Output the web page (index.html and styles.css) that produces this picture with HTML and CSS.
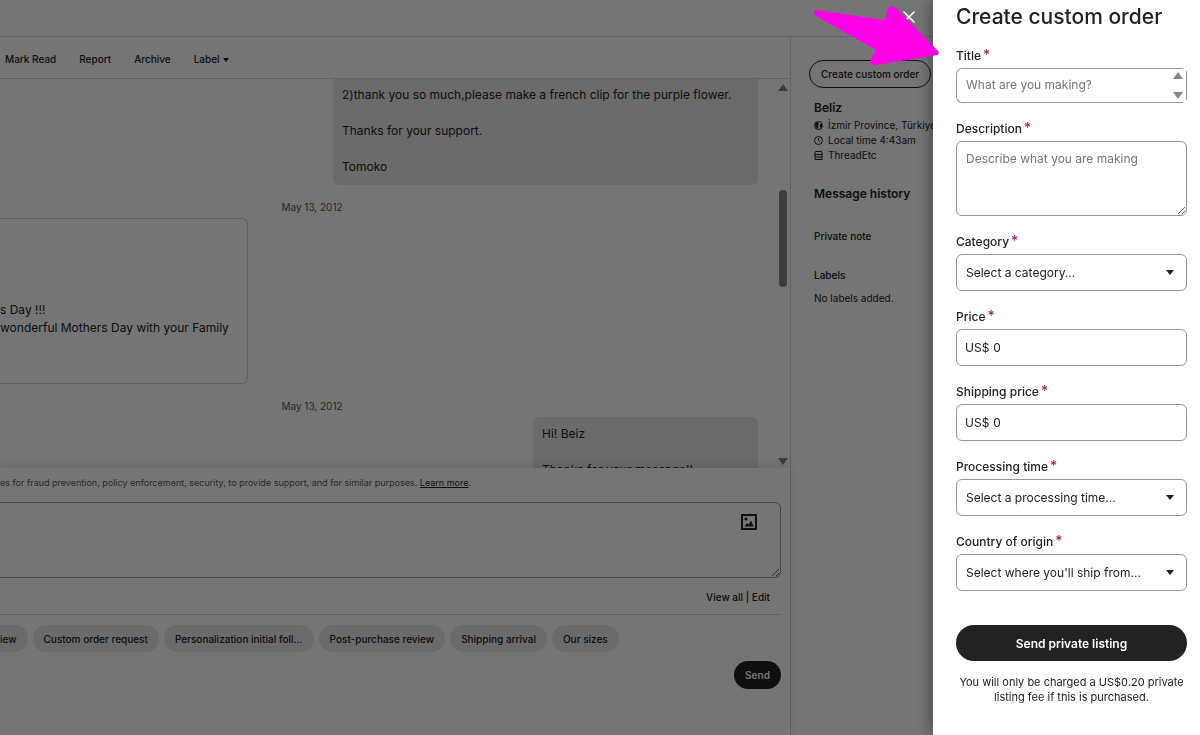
FILE: index.html
```html
<!DOCTYPE html>
<html lang="en">
<head>
  <meta charset="UTF-8" />
  <meta name="viewport" content="width=device-width, initial-scale=1.0"/>
  <title>Create custom order</title>
  <link rel="stylesheet" href="styles.css">
</head>
<body>
  <div class="app">
    <header class="topbar"></header>

    <div class="columns">
      <main class="conversation">
        <nav class="toolbar">
          <button>Mark Read</button>
          <button>Report</button>
          <button>Archive</button>
          <button>Label <span class="caret"></span></button>
        </nav>

        <div class="thread">
          <div class="messages">
            <div class="bubble sent first">2)thank you so much,please make a french clip for the purple flower.<br><br>Thanks for your support.<br><br>Tomoko</div>
            <div class="date">May 13, 2012</div>
            <div class="bubble received"><br><br><br><br>s Day !!!<br>wonderful Mothers Day with your Family<br><br><br></div>
            <div class="date">May 13, 2012</div>
            <div class="bubble sent short">Hi! Beiz<br><br>Thanks for your message!!</div>
          </div>
          <div class="scrollbar">
            <span class="arrow-up"></span>
            <span class="thumb"></span>
            <span class="arrow-down"></span>
          </div>
        </div>

        <section class="composer">
          <p class="notice">es for fraud prevention, policy enforcement, security, to provide support, and for similar purposes. <a href="#">Learn more</a>.</p>
          <div class="reply">
            <textarea aria-label="Reply"></textarea>
            <button class="attach" aria-label="Attach image">
              <svg width="16" height="16" viewBox="0 0 16 16">
                <rect x="1" y="1" width="14" height="14" fill="none" stroke="#222" stroke-width="2"/>
                <circle cx="5" cy="5" r="1.6" fill="#222"/>
                <path d="M3.5 12.5 L6 9 L7.5 10.5 L10 6.5 L12.5 12.5 Z" fill="#222"/>
              </svg>
            </button>
          </div>
          <div class="snippet-links"><a href="#">View all</a> | <a href="#">Edit</a></div>
          <div class="chips">
            <button class="cut">iew</button>
            <button>Custom order request</button>
            <button>Personalization initial foll...</button>
            <button>Post-purchase review</button>
            <button>Shipping arrival</button>
            <button>Our sizes</button>
          </div>
          <div class="send-row"><button class="send">Send</button></div>
        </section>
      </main>

      <aside class="buyer">
        <button class="create">Create custom order</button>
        <h2>Beliz</h2>
        <ul>
          <li>
            <svg width="9" height="9" viewBox="0 0 9 9"><circle cx="4.5" cy="4.5" r="4" fill="none" stroke="#222"/><path d="M1 2 L4 1 L5 3 L3.5 4.5 L4.5 6 L3.5 8 L2 6 L1 4 Z M6 3 L8 3 L8 6 L6.5 7 L5.5 5 Z" fill="#222"/></svg>
            İzmir Province, Türkiye
          </li>
          <li>
            <svg width="9" height="9" viewBox="0 0 9 9"><circle cx="4.5" cy="4.5" r="4" fill="none" stroke="#222"/><path d="M4.5 2 V4.5 L6 6" fill="none" stroke="#222"/></svg>
            Local time 4:43am
          </li>
          <li>
            <svg width="9" height="9" viewBox="0 0 9 9"><path d="M1.5 .5 H7.5 L8.5 3.5 H.5 Z M1 3.5 V8.5 H8 V3.5 M1 6 H8" fill="none" stroke="#222"/></svg>
            ThreadEtc
          </li>
        </ul>
        <h2 class="history">Message history</h2>
        <h3>Private note</h3>
        <h3>Labels</h3>
        <p>No labels added.</p>
      </aside>
    </div>
  </div>

  <div class="overlay"></div>

  <button class="close" aria-label="Close">
    <svg width="12" height="12" viewBox="0 0 12 12"><path d="M1 1 L11 11 M11 1 L1 11" stroke="#fff" stroke-width="1.5" stroke-linecap="round"/></svg>
  </button>

  <form class="drawer">
    <h1>Create custom order</h1>

    <div class="field">
      <label for="title">Title<span class="req">*</span></label>
      <div class="title-box">
        <textarea id="title" rows="1" placeholder="What are you making?"></textarea>
        <span class="steps"><span class="arrow-up"></span><span class="arrow-down"></span></span>
      </div>
    </div>

    <div class="field">
      <label for="description">Description<span class="req">*</span></label>
      <textarea id="description" placeholder="Describe what you are making"></textarea>
    </div>

    <div class="field">
      <label for="category">Category<span class="req">*</span></label>
      <div class="select"><select id="category"><option>Select a category...</option></select></div>
    </div>

    <div class="field">
      <label for="price">Price<span class="req">*</span></label>
      <div class="money"><span>US$</span><input id="price" type="text" value="0"></div>
    </div>

    <div class="field">
      <label for="shipping">Shipping price<span class="req">*</span></label>
      <div class="money"><span>US$</span><input id="shipping" type="text" value="0"></div>
    </div>

    <div class="field">
      <label for="processing">Processing time<span class="req">*</span></label>
      <div class="select"><select id="processing"><option>Select a processing time...</option></select></div>
    </div>

    <div class="field">
      <label for="country">Country of origin<span class="req">*</span></label>
      <div class="select"><select id="country"><option>Select where you'll ship from...</option></select></div>
    </div>

    <button class="submit" type="button">Send private listing</button>
    <p class="fee">You will only be charged a US$0.20 private listing fee if this is purchased.</p>
  </form>

  <svg class="pointer" width="128" height="64" viewBox="0 0 128 64">
    <path d="M4 8 Q0 10 4 14 L64 48 L58 59 Q59 64 65 63 L125 53 Q128 52 126 49 L84 6 Q79 2 76 6 L73 18 Z" fill="#ff00e6"/>
  </svg>
</body>
</html>
```
FILE: styles.css
```css
* {
  box-sizing: border-box;
}

body {
  margin: 0;
  font-family: Inter, "Liberation Sans", sans-serif;
  font-size: 12px;
  line-height: 18px;
  color: #222;
  background: #fff;
  overflow: hidden;
}

button, input, select, textarea {
  font-family: inherit;
  color: inherit;
}

button {
  padding: 0;
  border: none;
  background: none;
  font-size: 10px;
  font-weight: 500;
  cursor: pointer;
  white-space: nowrap;
}

a {
  color: inherit;
}

h1, h2, h3, p, ul {
  margin: 0;
  padding: 0;
}

.app {
  height: 100vh;
  display: flex;
  flex-direction: column;
}

.topbar {
  height: 37px;
  border-bottom: 1px solid #d8d8d8;
}

.columns {
  flex: 1;
  display: flex;
  min-height: 0;
}

.conversation {
  flex: 1;
  min-width: 0;
  display: flex;
  flex-direction: column;
  border-right: 1px solid #d8d8d8;
}

/* toolbar */
.toolbar {
  display: flex;
  gap: 23px;
  height: 42px;
  padding: 2px 5px 0;
  border-bottom: 1px solid #d8d8d8;
}

.caret {
  display: inline-block;
  margin-left: 1px;
  border: 3px solid transparent;
  border-top: 4px solid #222;
  border-bottom: none;
  vertical-align: 1px;
}

/* messages */
.thread {
  flex: 1;
  display: flex;
  min-height: 0;
  overflow: hidden;
}

.messages {
  flex: 1;
  display: flex;
  flex-direction: column;
  padding-right: 18px;
}

.bubble {
  flex: none;
  padding: 8px 9px;
  border-radius: 6px;
}

.sent {
  align-self: flex-end;
  background: #e9e9e9;
}

.first {
  width: 425px;
  padding: 7px 9px 9px;
  border-radius: 0 0 6px 6px;
}

.short {
  width: 225px;
}

.received {
  align-self: flex-start;
  width: 248px;
  padding: 10px 0;
  border: 1px solid #d0d0d0;
  border-left: none;
  border-radius: 0 6px 6px 0;
  white-space: nowrap;
}

.date {
  flex: none;
  margin-right: 134px;
  padding: 16px 0 5px;
  font-size: 10px;
  line-height: 12px;
  text-align: center;
  color: #595959;
}

.scrollbar {
  display: flex;
  flex-direction: column;
  align-items: center;
  width: 14px;
  padding: 5px 0 3px;
}

.arrow-up, .arrow-down {
  width: 10px;
  height: 7px;
  background: #858585;
}

.arrow-up {
  clip-path: polygon(50% 0, 100% 100%, 0 100%);
}

.arrow-down {
  clip-path: polygon(0 0, 100% 0, 50% 100%);
}

.thumb {
  width: 8px;
  height: 97px;
  margin: 99px 0 auto;
  border-radius: 4px;
  background: #858585;
}

/* composer */
.composer {
  position: relative;
  height: 267px;
  padding-right: 9px;
  background: #fff;
  box-shadow: 0 -2px 10px rgba(0, 0, 0, 0.12);
}

.notice {
  padding: 6px 0 10px;
  font-size: 9px;
  white-space: nowrap;
  color: #595959;
}

.notice a {
  color: #222;
}

.reply {
  position: relative;
}

.reply textarea {
  display: block;
  width: 100%;
  height: 76px;
  border: 1px solid #999;
  border-left: none;
  border-radius: 0 6px 6px 0;
  background: none;
}

.attach {
  position: absolute;
  top: 12px;
  right: 24px;
  line-height: 0;
}

.snippet-links {
  padding: 10px 11px 8px 0;
  border-bottom: 1px solid #d0d0d0;
  font-size: 10px;
  font-weight: 500;
  text-align: right;
}

.snippet-links a {
  text-decoration: none;
}

.chips {
  display: flex;
  gap: 5px;
  padding-top: 10px;
}

.chips button {
  height: 27px;
  padding: 0 11px;
  border-radius: 14px;
  background: #e9e9e9;
}

.chips .cut {
  padding-left: 0;
  border-radius: 0 14px 14px 0;
}

.send-row {
  padding-top: 9px;
  text-align: right;
}

.send {
  width: 47px;
  height: 28px;
  border-radius: 14px;
  background: #222;
  color: #fff;
  font-weight: 600;
}

/* buyer details */
.buyer {
  width: 409px;
  padding: 23px 18px;
}

.create {
  display: block;
  height: 28px;
  padding: 0 11px;
  border: 1px solid #222;
  border-radius: 14px;
}

.buyer h2, .buyer h3, .buyer ul, .buyer p {
  margin-left: 5px;
}

.buyer h2 {
  margin-top: 11px;
  font-size: 12px;
  font-weight: 600;
}

.buyer .history {
  margin-top: 22px;
}

.buyer ul {
  margin-top: 1px;
  list-style: none;
}

.buyer li {
  display: flex;
  align-items: center;
  gap: 5px;
  font-size: 10px;
  line-height: 15px;
}

.buyer h3 {
  margin-top: 21px;
  font-size: 10px;
  font-weight: 500;
}

.buyer .history + h3 {
  margin-top: 24px;
}

.buyer p {
  margin-top: 5px;
  font-size: 10px;
}

/* dark layer over the page */
.overlay {
  position: fixed;
  inset: 0;
  background: rgba(0, 0, 0, 0.54);
}

.close {
  position: fixed;
  top: 11px;
  right: 285px;
  line-height: 0;
}

/* drawer */
.drawer {
  position: fixed;
  top: 0;
  right: 0;
  bottom: 0;
  width: 267px;
  padding: 5px 13px 0 23px;
  background: #fff;
  box-shadow: 0 0 16px rgba(0, 0, 0, 0.5);
}

.drawer h1 {
  margin-bottom: 18px;
  font-size: 21px;
  font-weight: 500;
  line-height: 24px;
  white-space: nowrap;
}

.field {
  margin-bottom: 17px;
}

.field label {
  display: block;
  margin-bottom: 3px;
  font-size: 12px;
  font-weight: 500;
}

.req {
  margin-left: 2px;
  font-size: 14px;
  line-height: 12px;
  color: #a3236f;
}

.field textarea, .field select, .money {
  display: block;
  width: 100%;
  height: 37px;
  padding: 0 9px;
  border: 1px solid #959595;
  border-radius: 6px;
  background: #fff;
  font-size: 12px;
  line-height: 18px;
}

.field textarea {
  height: 75px;
  padding: 8px 9px;
}

textarea::placeholder {
  color: #757575;
}

.title-box {
  position: relative;
  padding-right: 4px;
}

.field .title-box textarea {
  height: 35px;
  padding: 7px 9px;
  border-right: none;
  border-radius: 6px 0 0 6px;
  resize: none;
  overflow: hidden;
}

.steps {
  position: absolute;
  top: 3px;
  right: 0;
  bottom: 3px;
  display: flex;
  flex-direction: column;
  justify-content: space-between;
  padding: 1px 3px 1px 0;
  border-right: 1px solid #959595;
}

.select {
  position: relative;
}

.select select {
  appearance: none;
}

.select::after {
  content: "";
  position: absolute;
  top: 16px;
  right: 13px;
  border: 4px solid transparent;
  border-top: 5px solid #222;
  border-bottom: none;
  pointer-events: none;
}

.field .money {
  display: flex;
  align-items: center;
  gap: 4px;
  padding: 0 8px;
}

.money input {
  flex: 1;
  min-width: 0;
  padding: 0;
  border: none;
  outline: none;
  font-size: 12px;
}

.submit {
  width: 100%;
  height: 36px;
  margin-top: 17px;
  border-radius: 18px;
  background: #222;
  color: #fff;
  font-size: 12px;
  font-weight: 600;
}

.fee {
  margin-top: 14px;
  font-size: 11px;
  line-height: 15px;
  text-align: center;
}

/* pink arrow that points at the drawer */
.pointer {
  position: fixed;
  top: 2px;
  right: 260px;
}
```
